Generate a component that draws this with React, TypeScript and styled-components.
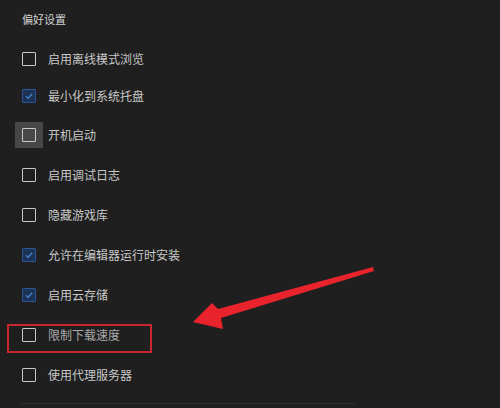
import React from 'react'
import styled, { createGlobalStyle } from 'styled-components'

const GlobalStyle = createGlobalStyle`
  html, body {
    margin: 0;
    padding: 0;
    background: #1f1f1f;
  }
  body {
    font-family: "Noto Sans CJK SC", "Noto Sans", sans-serif;
    width: 500px;
    height: 408px;
    overflow: hidden;
  }
`

const Page = styled.div`
  position: relative;
  width: 500px;
  height: 408px;
  background: #1f1f1f;
  padding: 10px 0 0 22px;
  box-sizing: border-box;
`

const Title = styled.div`
  font-size: 11px;
  line-height: 18px;
  color: #cfcfcf;
`

const List = styled.div`
  display: flex;
  flex-direction: column;
  margin-top: 13px;
`

const Row = styled.label<{ $h?: number }>`
  display: flex;
  align-items: center;
  gap: 12px;
  height: ${p => p.$h ?? 40}px;
`

// square pad round the box, shown on the hovered row
const Pad = styled.span<{ $hover?: boolean }>`
  display: flex;
  padding: 6px 7px;
  margin: -6px -7px;
  background: ${p => (p.$hover ? '#474747' : 'transparent')};
`

const Box = styled.span<{ $checked?: boolean }>`
  width: 14px;
  height: 14px;
  box-sizing: border-box;
  border-radius: 1px;
  border: 1.5px solid ${p => (p.$checked ? '#2a5596' : '#c9c9c9')};
  background: ${p => (p.$checked ? '#1a3357' : 'transparent')};
  display: flex;
  align-items: center;
  justify-content: center;
  flex-shrink: 0;
`

const Label = styled.span<{ $dim?: boolean }>`
  font-size: 12px;
  line-height: 16px;
  color: ${p => (p.$dim ? '#a9a9a9' : '#c8c8c8')};
`

const Divider = styled.div`
  margin: 8px 0 0 -2px;
  width: 335px;
  height: 1px;
  background: #2e2e2e;
`

const Highlight = styled.div`
  position: absolute;
  left: 7px;
  top: 324px;
  width: 145px;
  height: 29px;
  box-sizing: border-box;
  border: 2px solid #c8262e;
`

const Arrow = styled.svg`
  position: absolute;
  left: 0;
  top: 0;
  pointer-events: none;
`

const Check = () => (
  <svg width="10" height="10" viewBox="0 0 10 10">
    <path d="M2 5.2 L4.2 7.3 L8.2 2.8" fill="none" stroke="#4a7cc2" strokeWidth="1.4" />
  </svg>
)

const items: { text: string; checked?: boolean; hover?: boolean; dim?: boolean; h?: number }[] = [
  { text: '启用离线模式浏览', h: 36 },
  { text: '最小化到系统托盘', checked: true, h: 38 },
  { text: '开机启动', hover: true },
  { text: '启用调试日志' },
  { text: '隐藏游戏库' },
  { text: '允许在编辑器运行时安装', checked: true },
  { text: '启用云存储', checked: true },
  { text: '限制下载速度', dim: true },
  { text: '使用代理服务器' },
]

export default function App() {
  return (
    <>
      <GlobalStyle />
      <Page>
        <Title>偏好设置</Title>
        <List>
          {items.map(it => (
            <Row key={it.text} $h={it.h}>
              <Pad $hover={it.hover}>
                <Box $checked={it.checked}>{it.checked && <Check />}</Box>
              </Pad>
              <Label $dim={it.dim}>{it.text}</Label>
            </Row>
          ))}
        </List>
        <Divider />
        <Highlight />
        <Arrow width="500" height="408" viewBox="0 0 500 408">
          <polygon
            points="193,322 212,303 218,309 373,267 374,271 221,318 223,329"
            fill="#e8232b"
          />
        </Arrow>
      </Page>
    </>
  )
}
